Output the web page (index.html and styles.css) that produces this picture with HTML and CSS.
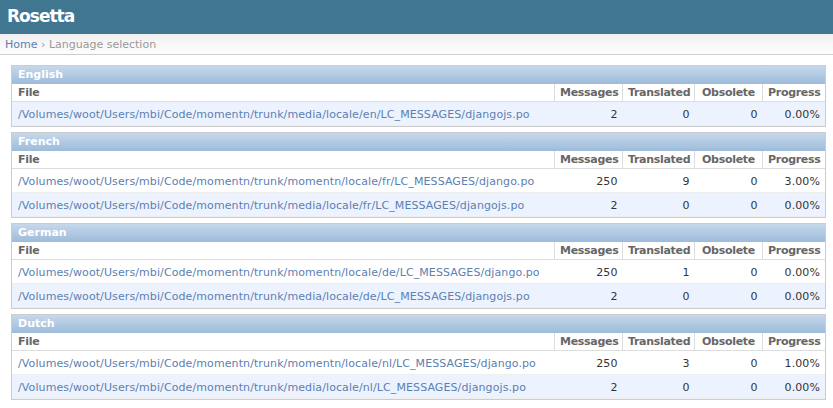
FILE: index.html
```html
<!DOCTYPE html>
<html lang="en">
<head>
    <meta charset="UTF-8">
    <title>Rosetta</title>
    <link rel="stylesheet" href="styles.css">
</head>
<body>
    <div id="header">
        <h1>Rosetta</h1>
    </div>
    <div class="breadcrumbs">
        <a href="#">Home</a> &rsaquo; Language selection
    </div>

    <div id="content">
        <!-- English -->
        <div class="module">
            <table>
                <caption>English</caption>
                <thead>
                    <tr>
                        <th class="file">File</th>
                        <th class="c-msg">Messages</th>
                        <th class="c-tr">Translated</th>
                        <th class="c-obs">Obsolete</th>
                        <th class="c-prog">Progress</th>
                    </tr>
                </thead>
                <tbody>
                    <tr class="row2">
                        <td><a href="#">/Volumes/woot/Users/mbi/Code/momentn/trunk/media/locale/en/LC_MESSAGES/djangojs.po</a></td>
                        <td class="num">2</td>
                        <td class="num">0</td>
                        <td class="num">0</td>
                        <td class="num">0.00%</td>
                    </tr>
                </tbody>
            </table>
        </div>

        <!-- French -->
        <div class="module">
            <table>
                <caption>French</caption>
                <thead>
                    <tr>
                        <th class="file">File</th>
                        <th class="c-msg">Messages</th>
                        <th class="c-tr">Translated</th>
                        <th class="c-obs">Obsolete</th>
                        <th class="c-prog">Progress</th>
                    </tr>
                </thead>
                <tbody>
                    <tr class="row1">
                        <td><a href="#">/Volumes/woot/Users/mbi/Code/momentn/trunk/momentn/locale/fr/LC_MESSAGES/django.po</a></td>
                        <td class="num">250</td>
                        <td class="num">9</td>
                        <td class="num">0</td>
                        <td class="num">3.00%</td>
                    </tr>
                    <tr class="row2">
                        <td><a href="#">/Volumes/woot/Users/mbi/Code/momentn/trunk/media/locale/fr/LC_MESSAGES/djangojs.po</a></td>
                        <td class="num">2</td>
                        <td class="num">0</td>
                        <td class="num">0</td>
                        <td class="num">0.00%</td>
                    </tr>
                </tbody>
            </table>
        </div>

        <!-- German -->
        <div class="module">
            <table>
                <caption>German</caption>
                <thead>
                    <tr>
                        <th class="file">File</th>
                        <th class="c-msg">Messages</th>
                        <th class="c-tr">Translated</th>
                        <th class="c-obs">Obsolete</th>
                        <th class="c-prog">Progress</th>
                    </tr>
                </thead>
                <tbody>
                    <tr class="row1">
                        <td><a href="#">/Volumes/woot/Users/mbi/Code/momentn/trunk/momentn/locale/de/LC_MESSAGES/django.po</a></td>
                        <td class="num">250</td>
                        <td class="num">1</td>
                        <td class="num">0</td>
                        <td class="num">0.00%</td>
                    </tr>
                    <tr class="row2">
                        <td><a href="#">/Volumes/woot/Users/mbi/Code/momentn/trunk/media/locale/de/LC_MESSAGES/djangojs.po</a></td>
                        <td class="num">2</td>
                        <td class="num">0</td>
                        <td class="num">0</td>
                        <td class="num">0.00%</td>
                    </tr>
                </tbody>
            </table>
        </div>

        <!-- Dutch -->
        <div class="module">
            <table>
                <caption>Dutch</caption>
                <thead>
                    <tr>
                        <th class="file">File</th>
                        <th class="c-msg">Messages</th>
                        <th class="c-tr">Translated</th>
                        <th class="c-obs">Obsolete</th>
                        <th class="c-prog">Progress</th>
                    </tr>
                </thead>
                <tbody>
                    <tr class="row1">
                        <td><a href="#">/Volumes/woot/Users/mbi/Code/momentn/trunk/momentn/locale/nl/LC_MESSAGES/django.po</a></td>
                        <td class="num">250</td>
                        <td class="num">3</td>
                        <td class="num">0</td>
                        <td class="num">1.00%</td>
                    </tr>
                    <tr class="row2">
                        <td><a href="#">/Volumes/woot/Users/mbi/Code/momentn/trunk/media/locale/nl/LC_MESSAGES/djangojs.po</a></td>
                        <td class="num">2</td>
                        <td class="num">0</td>
                        <td class="num">0</td>
                        <td class="num">0.00%</td>
                    </tr>
                </tbody>
            </table>
        </div>
    </div>
</body>
</html>
```

FILE: styles.css
```css
/* base */
body {
    margin: 0;
    padding: 0;
    font-family: "DejaVu Sans", Verdana, sans-serif;
    font-size: 12px;
    color: #333;
    background: #fff;
}

a {
    color: #5b80b2;
    text-decoration: none;
}

/* top bar */
#header {
    background: #417690;
    height: 34px;
    overflow: hidden;
}

#header h1 {
    margin: 0;
    padding: 0 7px;
    font-size: 17px;
    line-height: 33px;
    font-weight: bold;
    color: #fff;
    letter-spacing: -1px;
}

/* breadcrumbs */
.breadcrumbs {
    height: 20px;
    line-height: 21px;
    padding: 0 5px;
    font-size: 11px;
    color: #999;
    background: linear-gradient(to bottom, #f1f1f1, #fdfdfd);
    border-bottom: 1px solid #ccc;
}

/* content area */
#content {
    padding: 10px 7px 0 11px;
}

.module {
    border: 1px solid #ccc;
    margin-bottom: 5px;
    background: #fff;
}

.module table {
    width: 100%;
    border-collapse: collapse;
    table-layout: fixed;
}

caption {
    text-align: left;
    font-size: 11px;
    font-weight: bold;
    line-height: 13px;
    padding: 2px 6px 3px;
    color: #fff;
    background: linear-gradient(to bottom, #c6d8eb, #9dbbda);
}

th, td {
    font-size: 11px;
    vertical-align: middle;
}

th {
    padding: 2px 5px;
    line-height: 13px;
    font-weight: bold;
    color: #666;
    text-align: center;
    border-bottom: 1px solid #ddd;
    border-left: 1px solid #ddd;
    white-space: nowrap;
    letter-spacing: -0.3px;
}

th.file {
    text-align: left;
    border-left: none;
    padding-left: 6px;
}

/* column widths (content box, padding is 5px a side) */
.c-msg { width: 57px; }
.c-tr { width: 61px; }
.c-obs { width: 57px; }
.c-prog { width: 52px; }

td {
    padding: 6px 6px 4px;
    line-height: 13px;
    border-bottom: 1px solid #eee;
    white-space: nowrap;
    overflow: hidden;
    letter-spacing: 0.1px;
}

td.num {
    text-align: right;
    padding-right: 5px;
}

tr.row1 {
    background: #fff;
}

tr.row2 {
    background: #edf3fe;
}
```
